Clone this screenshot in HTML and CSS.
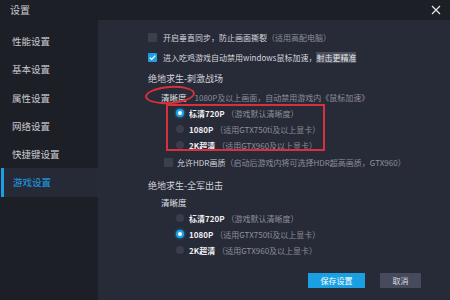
FILE: index.html
```html
<!DOCTYPE html>
<html>
<head>
<meta charset="utf-8">
<link rel="stylesheet" href="styles.css">
</head>
<body>
<div class="window">
  <div class="titlebar">
    <span class="title">设置</span>
    <svg class="close" width="10" height="10" viewBox="0 0 10 10"><path d="M1 1L9 9M9 1L1 9" stroke="#e6e6ea" stroke-width="1.2"/></svg>
  </div>
  <div class="main">
    <nav class="sidebar">
      <div class="nav-item">性能设置</div>
      <div class="nav-item">基本设置</div>
      <div class="nav-item">属性设置</div>
      <div class="nav-item">网络设置</div>
      <div class="nav-item">快捷键设置</div>
      <div class="nav-item active">游戏设置</div>
    </nav>
    <section class="content">
      <div class="row check-row r1"><span class="box"></span><span class="txt">开启垂直同步，防止画面撕裂</span><span class="hint">（适用高配电脑）</span></div>
      <div class="row check-row r2"><span class="box checked"><svg width="9" height="9" viewBox="0 0 9 9"><path d="M1.8 4.6L3.7 6.4L7.3 2.6" fill="none" stroke="#fff" stroke-width="1.3"/></svg></span><span class="txt">进入吃鸡游戏自动禁用windows鼠标加速，<span class="sel">射击更精准</span></span></div>
      <div class="row section s1">绝地求生-刺激战场</div>
      <div class="row sub q1"><span class="ring-anchor">清晰度<span class="ellipse"></span></span><span class="hint">1080P及以上画面，自动禁用游戏内《鼠标加速》</span></div>
      <div class="radios boxed">
        <div class="row radio-row"><span class="radio on"></span><span class="lbl">标清720P</span><span class="hint">（游戏默认清晰度）</span></div>
        <div class="row radio-row"><span class="radio"></span><span class="lbl">1080P</span><span class="hint">（适用GTX750ti及以上显卡）</span></div>
        <div class="row radio-row"><span class="radio"></span><span class="lbl">2K超清</span><span class="hint">（适用GTX960及以上显卡）</span></div>
        <span class="redbox"></span>
      </div>
      <div class="row check-row hdr"><span class="box"></span><span class="txt">允许HDR画质</span><span class="hint">（启动后游戏内将可选择HDR超高画质，GTX960）</span></div>
      <div class="row section s2">绝地求生-全军出击</div>
      <div class="row sub q2">清晰度</div>
      <div class="radios">
        <div class="row radio-row"><span class="radio"></span><span class="lbl">标清720P</span><span class="hint">（游戏默认清晰度）</span></div>
        <div class="row radio-row"><span class="radio on"></span><span class="lbl">1080P</span><span class="hint">（适用GTX750ti及以上显卡）</span></div>
        <div class="row radio-row"><span class="radio"></span><span class="lbl">2K超清</span><span class="hint">（适用GTX960及以上显卡）</span></div>
      </div>
      <div class="actions">
        <button class="btn primary">保存设置</button>
        <button class="btn secondary">取消</button>
      </div>
    </section>
  </div>
</div>
</body>
</html>
```
FILE: styles.css
```css
* { box-sizing: border-box; margin: 0; padding: 0; }
html, body { width: 450px; height: 300px; overflow: hidden; background: #272a37; }
body { font-family: "Noto Sans CJK SC", "Noto Sans", sans-serif; color: #d6d7dc; }
.window { width: 450px; height: 300px; display: flex; flex-direction: column; }
.titlebar { height: 20px; flex: none; background: #1d1f26; display: flex; align-items: center; justify-content: space-between; padding: 0 9px 0 10px; }
.title { font-size: 10px; color: #c9cad0; line-height: 20px; }
.close { display: block; }
.main { flex: 1; display: flex; min-height: 0; }
.sidebar { width: 98px; flex: none; background: #1d1f26; padding-top: 7px; display: flex; flex-direction: column; }
.nav-item { height: 28.3px; line-height: 28px; padding-left: 12px; font-size: 9.5px; color: #c9cad0; }
.nav-item.active { color: #1aa0e6; background: #262936; border-left: 3px solid #1aa0e6; padding-left: 9px; margin-left: 1px; }
.content { flex: 1; padding: 9px 0 0 50px; display: flex; flex-direction: column; position: relative; }
.row { height: 16px; display: flex; align-items: center; font-size: 8px; white-space: nowrap; }
.hint { color: #8d909c; }
.box { width: 9px; height: 9px; background: #3c3f4d; border-radius: 1px; flex: none; display: flex; align-items: center; justify-content: center; }
.box.checked { background: #1d9fe2; }
.check-row .box { margin-right: 6px; }
.r2 { margin-top: 4px; }
.sel { background: #4a4d5a; color: #e6e7ea; }
.section { font-size: 9px; color: #d3d4d9; margin-top: 5px; }
.sub { padding-left: 13px; font-size: 8.5px; color: #e2e3e6; margin-top: 3px; }
.sub .hint { font-size: 8px; margin-left: 8px; }
.ring-anchor { position: relative; }
.ellipse { position: absolute; left: -16px; top: -5px; width: 50px; height: 18px; border: 2px solid #d8313c; border-radius: 50%; transform: rotate(-4deg); }
.radios { position: relative; display: flex; flex-direction: column; margin-left: 28px; width: 158px; }
.radio-row .radio { width: 8px; height: 8px; border-radius: 50%; background: #3a3d4b; margin-right: 5px; flex: none; }
.radio.on { background: #fff; border: 2.5px solid #1aa3ea; box-shadow: 0 0 3px #1aa3ea; }
.lbl { color: #f0f0f2; font-weight: 700; }
.radio-row .hint { margin-left: 2px; }
.redbox { position: absolute; left: -10px; top: -1px; width: 159px; height: 47px; border: 2px solid #d8313c; }
.hdr { padding-left: 16px; margin-top: 1px; }
.hdr .box { margin-right: 4px; }
.s2 { margin-top: 7px; }
.q2 { margin-top: 1px; }
.actions { display: flex; gap: 15px; margin-top: 15px; padding-left: 160px; }
.btn { height: 15px; border: none; font-family: inherit; font-size: 8px; color: #fff; display: flex; align-items: center; justify-content: center; }
.btn.primary { width: 57px; background: #1a9fe2; }
.btn.secondary { width: 41px; background: #474a5b; color: #d9dae0; }
```
